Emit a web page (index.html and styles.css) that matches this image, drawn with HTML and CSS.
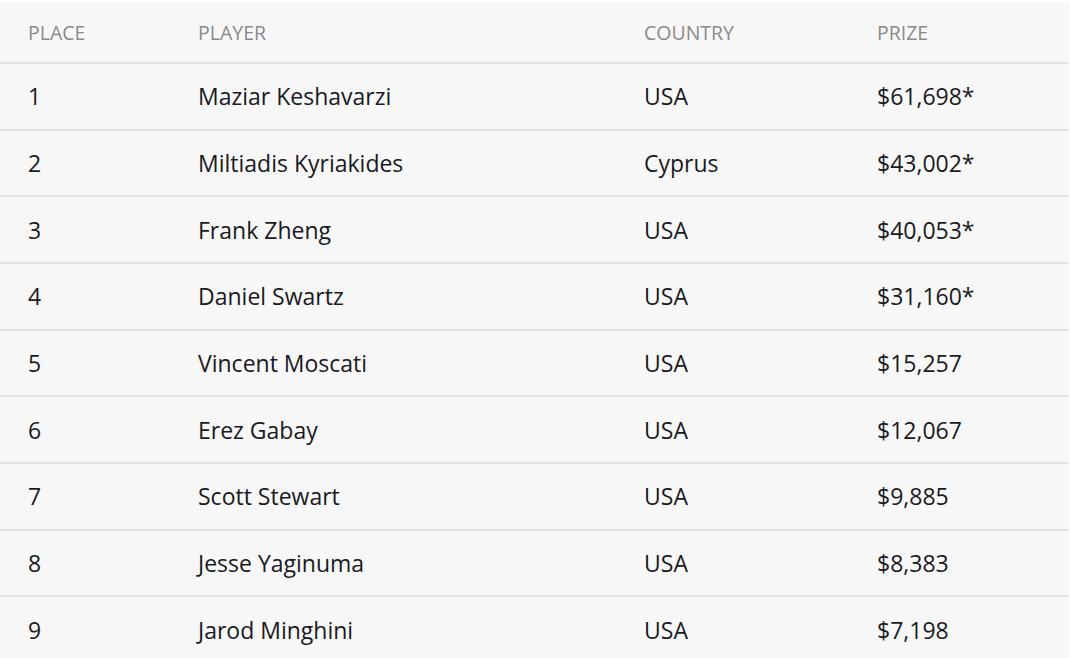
FILE: index.html
```html
<!DOCTYPE html>
<html>
<head>
<meta charset="utf-8">
<link rel="stylesheet" href="styles.css">
</head>
<body>
<div class="wrap">
<table class="results">
  <thead>
    <tr><th class="c-place">PLACE</th><th class="c-player">PLAYER</th><th class="c-country">COUNTRY</th><th class="c-prize">PRIZE</th></tr>
  </thead>
  <tbody>
    <tr><td>1</td><td>Maziar Keshavarzi</td><td>USA</td><td>$61,698*</td></tr>
    <tr><td>2</td><td>Miltiadis Kyriakides</td><td>Cyprus</td><td>$43,002*</td></tr>
    <tr><td>3</td><td>Frank Zheng</td><td>USA</td><td>$40,053*</td></tr>
    <tr><td>4</td><td>Daniel Swartz</td><td>USA</td><td>$31,160*</td></tr>
    <tr><td>5</td><td>Vincent Moscati</td><td>USA</td><td>$15,257</td></tr>
    <tr><td>6</td><td>Erez Gabay</td><td>USA</td><td>$12,067</td></tr>
    <tr><td>7</td><td>Scott Stewart</td><td>USA</td><td>$9,885</td></tr>
    <tr><td>8</td><td>Jesse Yaginuma</td><td>USA</td><td>$8,383</td></tr>
    <tr><td>9</td><td>Jarod Minghini</td><td>USA</td><td>$7,198</td></tr>
  </tbody>
</table>
</div>
</body>
</html>
```

FILE: styles.css
```css
html, body {
  margin: 0;
  padding: 0;
  background: #ffffff;
  overflow: hidden;
}
.wrap {
  margin-top: 2px;
  width: 1069px;
  background: #f7f7f7;
}
.results {
  width: 100%;
  border-collapse: collapse;
  font-family: "Open Sans", "Liberation Sans", sans-serif;
  table-layout: fixed;
}
.results th {
  height: 60px;
  padding: 0;
  text-align: left;
  font-weight: 400;
  font-size: 19.5px;
  color: #8a8a8a;
  border-bottom: 2px solid #e3e3e3;
  vertical-align: middle;
}
.results td {
  height: 64.67px;
  padding: 0;
  font-size: 23px;
  color: #1a1a22;
  border-bottom: 2px solid #e3e3e3;
  vertical-align: middle;
}
.results th:first-child, .results td:first-child { padding-left: 28px; }
.c-place { width: 170px; }
.c-player { width: 446px; }
.c-country { width: 233px; }
```
